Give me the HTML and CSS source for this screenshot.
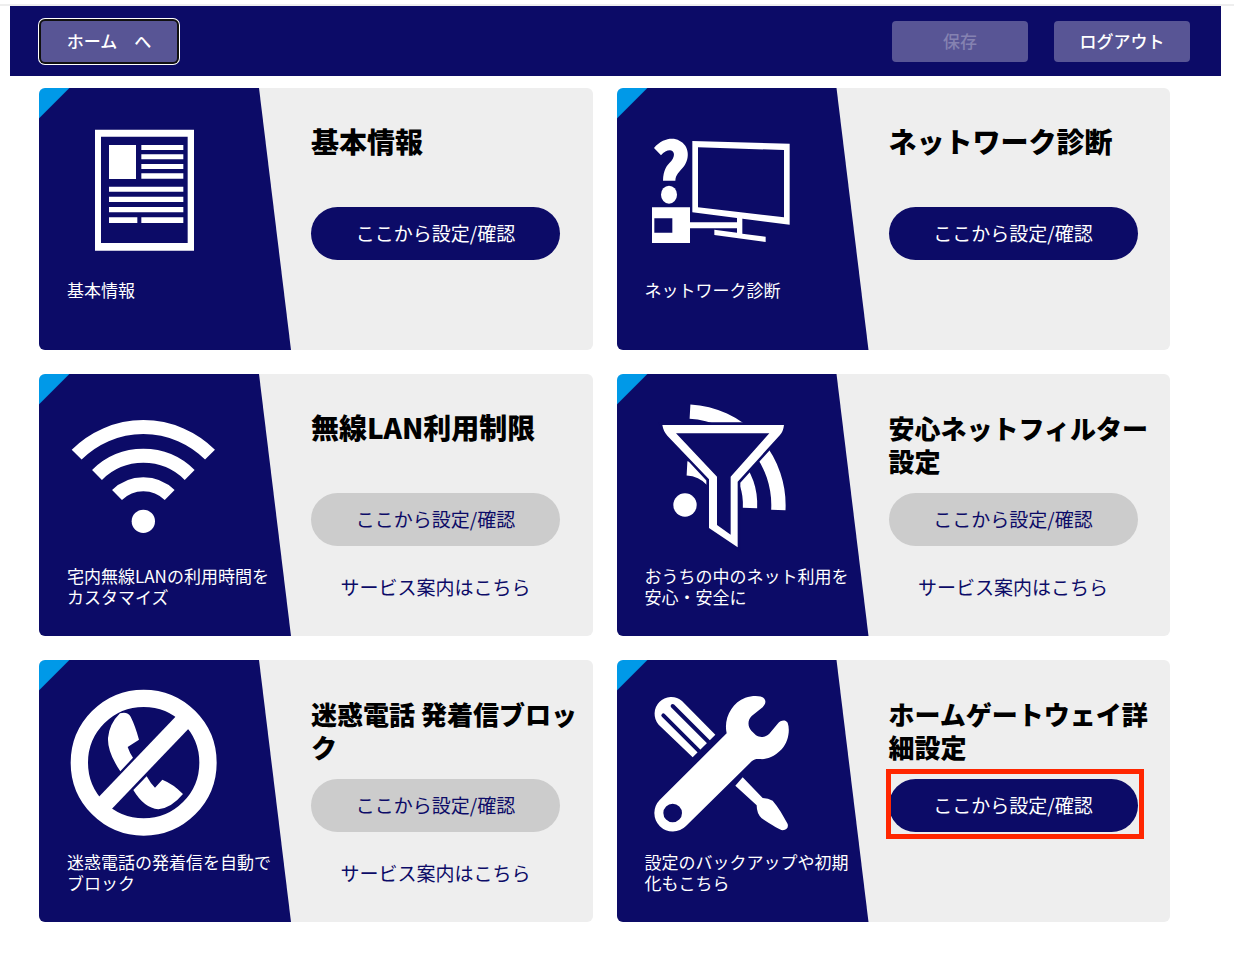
FILE: index.html
```html
<!DOCTYPE html>
<html lang="ja">
<head>
	<meta charset="UTF-8">
	<meta name="viewport" content="width=device-width, initial-scale=1.0">
	<title>ホーム</title>
	<link rel="stylesheet" href="styles.css">
</head>
<body>

	<div class="page">
		<header class="header">
			<button type="button" class="header-btn header-btn-focus">ホーム　へ</button>
			<div class="header-actions">
				<button type="button" class="header-btn" disabled>保存</button>
				<button type="button" class="header-btn">ログアウト</button>
			</div>
		</header>

		<main class="cards">

			<section class="card">
				<div class="card-panel">
					<svg class="card-icon" viewBox="111 108 456 456" aria-hidden="true">
						<path fill-rule="evenodd" d="M195 149H492V512H195ZM213 170V489H473V170Z"/>
						<path d="M237 195h81v102h-81zM334 195h126v15H334zM334 223h126v15H334zM334 252h126v15H334zM334 280h126v16H334zM237 320h223v15H237zM237 350h223v16H237zM237 381h223v16H237zM237 412h85v17h-85zM334 412h126v17H334z"/>
					</svg>
					<p class="card-desc">基本情報</p>
				</div>
				<div class="card-body">
					<h2 class="card-title">基本情報</h2>
					<button type="button" class="pill">ここから設定/確認</button>
				</div>
			</section>

			<section class="card">
				<div class="card-panel">
					<svg class="card-icon" viewBox="105 108 456 456" aria-hidden="true">
						<path d="M132 204C158 174 190 172 208 182C238 196 240 234 222 259C208 276 197 284 196 302H159C160 270 170 256 184 243C199 224 190 211 180 211Q166 211 153 226Z"/>
						<ellipse cx="177" cy="344" rx="24" ry="27"/>
						<path fill-rule="evenodd" d="M126 382H240V489H126ZM133 415V458H187V415Z"/>
						<path fill-rule="evenodd" d="M247 183L539 191V434L247 397ZM264 202V382L522 412V210Z"/>
						<path d="M240 427H381V410H397V461L467 470V486L313 465V449L381 458V445H240Z"/>
					</svg>
					<p class="card-desc">ネットワーク診断</p>
				</div>
				<div class="card-body">
					<h2 class="card-title">ネットワーク診断</h2>
					<button type="button" class="pill">ここから設定/確認</button>
				</div>
			</section>

			<section class="card">
				<div class="card-panel">
					<svg class="card-icon" viewBox="111 96 456 456" aria-hidden="true">
						<g class="icon-line" stroke-width="42">
							<path d="M140 254A283 283 0 0 1 540 254"/>
							<path d="M201 315A197 197 0 0 1 479 315"/>
							<path d="M261 375A112 112 0 0 1 419 375"/>
						</g>
						<circle cx="340" cy="454" r="35"/>
					</svg>
					<p class="card-desc">宅内無線LANの利用時間をカスタマイズ</p>
				</div>
				<div class="card-body">
					<h2 class="card-title">無線LAN利用制限</h2>
					<button type="button" class="pill" disabled>ここから設定/確認</button>
					<a class="card-link" href="#">サービス案内はこちら</a>
				</div>
			</section>

			<section class="card">
				<div class="card-panel">
					<svg class="card-icon" viewBox="105 96 456 456" aria-hidden="true">
						<circle cx="225" cy="405" r="35"/>
						<g class="icon-line" stroke-width="43">
							<path d="M240 125A281 281 0 0 1 505 420"/>
							<path d="M235 210A195 195 0 0 1 420 414"/>
							<path d="M231 295A112 112 0 0 1 337 410"/>
						</g>
						<!-- funnel, with a gap cut out of the waves around it -->
						<path class="icon-gap" stroke-width="16" d="M157 165H522L514 190L383 335V532L297 474V328L168 190Z"/>
						<path fill-rule="evenodd" d="M157 165H522Q520 184 510 195L383 335V532L297 474V328L172 197Q160 184 157 165ZM198 190L321 320V465L362 494V320L478 190Z"/>
					</svg>
					<p class="card-desc">おうちの中のネット利用を安心・安全に</p>
				</div>
				<div class="card-body">
					<h2 class="card-title card-title-long">安心ネットフィルター設定</h2>
					<button type="button" class="pill" disabled>ここから設定/確認</button>
					<a class="card-link" href="#">サービス案内はこちら</a>
				</div>
			</section>

			<section class="card">
				<div class="card-panel">
					<svg class="card-icon" viewBox="111 98 456 456" aria-hidden="true">
						<circle class="icon-line" stroke-width="52" cx="341" cy="322" r="193"/>
						<path class="icon-line" stroke-width="53" d="M460 198L221 448"/>
						<path d="M270 174Q293 168 302 184Q316 212 327 253L293 275Q299 293 309 307L271 348Q232 290 234 248Q238 205 270 174Z"/>
						<path d="M350 363Q362 385 375 397L397 373Q430 386 459 416Q424 458 385 462Q342 458 310 404Z"/>
					</svg>
					<p class="card-desc">迷惑電話の発着信を自動でブロック</p>
				</div>
				<div class="card-body">
					<h2 class="card-title card-title-long">迷惑電話 発着信ブロック</h2>
					<button type="button" class="pill" disabled>ここから設定/確認</button>
					<a class="card-link" href="#">サービス案内はこちら</a>
				</div>
			</section>

			<section class="card">
				<div class="card-panel">
					<svg class="card-icon" viewBox="105 98 456 456" aria-hidden="true">
						<!-- screwdriver -->
						<path d="M146 208A50 50 0 0 1 216 137L316 238L248 306Z"/>
						<path class="icon-slot" d="M188 152L302 266M160 180L274 294"/>
						<path d="M398 366L458 428Q475 428 488 436C505 455 520 482 533 506Q537 522 518 525Q505 523 455 489Q440 475 440 450L376 391Z"/>
						<!-- wrench -->
						<path fill-rule="evenodd" d="M149 434L350 234C340 190 365 142 406 127C428 120 455 120 463 130C470 140 465 150 455 158L425 182C412 195 413 214 424 226L438 240C452 249 468 245 478 235L503 205C512 195 525 192 533 202C541 225 535 260 515 282C490 308 465 313 450 311C440 310 433 311 425 318L228 512A55 55 0 0 1 149 434ZM188 445A28 28 0 1 0 188 501A28 28 0 1 0 188 445Z"/>
					</svg>
					<p class="card-desc">設定のバックアップや初期化もこちら</p>
				</div>
				<div class="card-body">
					<h2 class="card-title card-title-long">ホームゲートウェイ詳細設定</h2>
					<div class="marked">
						<button type="button" class="pill">ここから設定/確認</button>
					</div>
				</div>
			</section>

		</main>
	</div>

</body>
</html>
```
FILE: styles.css
```css
* {
	box-sizing: border-box;
}
body {
	margin: 0;
	background-color: #ffffff;
	color: #000000;
	font-family: "Noto Sans CJK JP", sans-serif;
}
button {
	font-family: inherit;
	border: none;
	cursor: pointer;
}
.page {
	margin-top: 4px;
	padding: 0 13px 35px 10px;
	border-top: 2px solid #eeeeee;
}

/* header */
.header {
	display: flex;
	justify-content: space-between;
	padding: 15px 31px 14px;
	background-color: #0c0b67;
}
.header-actions {
	display: flex;
	gap: 26px;
}
.header-btn {
	width: 136px;
	height: 41px;
	padding: 0 0 3px;
	border-radius: 4px;
	background-color: #585595;
	color: #ffffff;
	font-size: 17px;
	font-weight: 500;
}
.header-btn:disabled {
	color: #8582b1;
	cursor: default;
}
.header-btn-focus {
	box-shadow: 0 0 0 2px #101010, 0 0 0 3px #ffffff;
}

/* cards */
.cards {
	display: grid;
	grid-template-columns: 1fr 1fr;
	gap: 24px;
	padding: 12px 51px 0 29px;
}
.card {
	display: flex;
	min-height: 262px;
	border-radius: 6px;
	background-color: #eeeeee;
	overflow: hidden;
}
.card-panel {
	flex: 0 0 252px;
	padding: 28px 14px 28px 28px;
	background: linear-gradient(135deg, #0099e8 21px, #0c0b67 22px);
	clip-path: polygon(0 0, 220px 0, 100% 100%, 0 100%);
	color: #ffffff;
}
.card-icon {
	display: block;
	width: 152px;
	height: 152px;
	margin-bottom: 11px;
	fill: #ffffff;
}
.icon-line {
	fill: none;
	stroke: #ffffff;
}
.icon-gap {
	fill: #0c0b67;
	stroke: #0c0b67;
}
.icon-slot {
	fill: none;
	stroke: #0c0b67;
	stroke-width: 12px;
	stroke-linecap: round;
}
.card-desc {
	margin: 0;
	font-size: 17px;
	line-height: 21px;
}
.card-body {
	flex: 1;
	padding: 37px 10px 36px 20px;
}
.card-title {
	min-height: 66px;
	margin: 0 0 16px;
	font-size: 28px;
	font-weight: 900;
	line-height: 33px;
}
.card-title-long {
	font-size: 26px;
}
.pill {
	display: block;
	width: 249px;
	height: 53px;
	padding: 0 0 2px;
	border-radius: 27px;
	background-color: #0c0b67;
	color: #ffffff;
	font-size: 19px;
}
.pill:disabled {
	background-color: #cccccc;
	color: #0c0b67;
	cursor: default;
}
.card-link {
	display: block;
	width: 249px;
	margin-top: 28px;
	color: #0c0b67;
	font-size: 19px;
	line-height: 26px;
	text-align: center;
	text-decoration: none;
}

/* red frame around the button to press */
.marked {
	position: relative;
	width: 249px;
}
.marked::after {
	content: "";
	position: absolute;
	inset: -10px -6px -7px -3px;
	border: 5px solid #ff2600;
	pointer-events: none;
}
```
